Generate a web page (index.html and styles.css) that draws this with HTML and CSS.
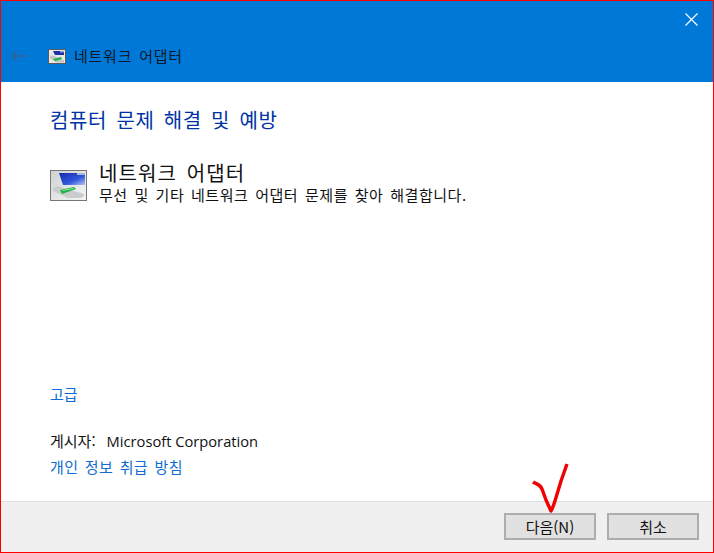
FILE: index.html
```html
<!DOCTYPE html>
<html lang="ko">
<head>
<meta charset="utf-8">
<title>네트워크 어댑터</title>
<link rel="stylesheet" href="styles.css">
</head>
<body>
<div class="window">
  <header class="titlebar">
    <div class="close-row">
      <svg class="close" width="13" height="13" viewBox="0 0 13 13"><path d="M.5.5l12 12M12.5.5l-12 12" stroke="#fff" stroke-width="1.2" fill="none"/></svg>
    </div>
    <div class="nav-row">
      <svg class="back" width="16" height="12" viewBox="0 0 16 12"><path d="M6 1L1 6l5 5M1 6h15" stroke="#2a66a6" stroke-width="1.800" fill="none"/></svg>
      <svg class="icon-small" width="18" height="15" viewBox="0 0 18 15">
        <rect x=".5" y=".5" width="17" height="14" fill="#e6e8e8" stroke="#5a5a5a"/>
        <path d="M5 2h11v4H7z" fill="#1c2fa8"/>
        <path d="M12 2h4v1.500h-4z" fill="#8c9ad0"/>
        <path d="M2 7l3-.5 11 5v2H8L2 9z" fill="#c0c4c4"/>
        <path d="M5 10l8-2 1 2-7 2z" fill="#1fb345"/>
      </svg>
      <span class="nav-title">네트워크 어댑터</span>
    </div>
  </header>
  <main class="content">
    <h1 class="heading">컴퓨터 문제 해결 및 예방</h1>
    <div class="item">
      <svg class="icon-large" width="37" height="31" viewBox="0 0 37 31">
        <defs>
          <linearGradient id="g" x1="0" y1="0" x2="1" y2="1"><stop offset="0" stop-color="#cfd2d2"/><stop offset="1" stop-color="#f5f5f5"/></linearGradient>
          <linearGradient id="b" x1="0" y1="0" x2="1" y2="1"><stop offset="0" stop-color="#1a2aa8"/><stop offset=".6" stop-color="#2f57dc"/><stop offset="1" stop-color="#b8c6ee"/></linearGradient>
        </defs>
        <rect x=".5" y=".5" width="36" height="30" fill="url(#g)" stroke="#777"/>
        <path d="M9 3h26v12H13z" fill="url(#b)"/>
        <path d="M27 3h8v2h-8z" fill="#aab4d8"/>
        <path d="M3 18l4-2 27 8v2l-3 2H18L3 21z" fill="#c9cdcd"/>
        <path d="M10 20l14-3 2 2-14 5z" fill="#1fb345"/>
        <path d="M12 20l11-2 1 1-11 2z" fill="#7be08f"/>
      </svg>
      <div class="item-text">
        <div class="item-title">네트워크 어댑터</div>
        <div class="item-desc">무선 및 기타 네트워크 어댑터 문제를 찾아 해결합니다.</div>
      </div>
    </div>
    <div class="links">
      <a class="link advanced">고급</a>
      <div class="publisher"><span>게시자:</span><span>Microsoft Corporation</span></div>
      <a class="link policy">개인 정보 취급 방침</a>
    </div>
  </main>
  <footer class="footer">
    <button class="btn">다음(N)</button>
    <button class="btn">취소</button>
  </footer>
  <svg class="check" width="40" height="54" viewBox="0 0 40 54"><path d="M3 20c3 2 7 2 9 7l4 11 5 11c3-5 5-14 7-20l3-10 6-17" stroke="#f00000" stroke-width="3.400" fill="none" stroke-linejoin="round"/></svg>
</div>
</body>
</html>
```
FILE: styles.css
```css
* { box-sizing: border-box; }
html, body { margin: 0; padding: 0; }
body { width: 714px; height: 553px; overflow: hidden; background: #fff; font-family: "Noto Sans CJK KR", "Open Sans", sans-serif; }
.window { position: relative; width: 714px; height: 553px; border: 1px solid #f00; display: flex; flex-direction: column; }
.titlebar { height: 81px; background: #0078d7; display: flex; flex-direction: column; flex: none; }
.close-row { display: flex; justify-content: flex-end; padding: 12px 15px 0 0; height: 43px; }
.nav-row { display: flex; align-items: center; height: 24px; padding-left: 10px; }
.back { margin-right: 21px; }
.icon-small { margin-right: 8px; }
.nav-title { font-size: 15px; color: #0b1a2b; line-height: 24px; letter-spacing: .75px; word-spacing: 2px; }
.content { flex: 1; display: flex; flex-direction: column; padding: 24px 0 0 49px; min-height: 0; }
.heading { margin: 0; font-size: 20px; font-weight: 400; line-height: 28px; color: #0033a5; letter-spacing: .65px; word-spacing: 3px; }
.item { display: flex; margin-top: 26px; }
.icon-large { margin: 10px 12px 0 0; flex: none; }
.item-text { display: flex; flex-direction: column; }
.item-title { font-size: 20px; line-height: 25px; color: #111; letter-spacing: 1.1px; word-spacing: 3px; }
.item-desc { font-size: 15px; line-height: 20px; color: #111; letter-spacing: .55px; word-spacing: 2px; }
.links { margin-top: auto; display: flex; flex-direction: column; padding-bottom: 23px; }
.link { font-size: 15px; line-height: 22px; color: #0f6cd0; }
.policy { letter-spacing: .35px; word-spacing: 2px; }
.advanced { margin-bottom: 24px; }
.publisher { display: flex; gap: 10px; font-size: 15px; line-height: 24px; color: #111; margin-bottom: 3px; }
.publisher span:last-child { font-family: "Open Sans", sans-serif; font-size: 14.700px; margin-left: 1px; }
.footer { height: 51px; flex: none; background: #f0f0f0; border-top: 1px solid #dfdfdf; display: flex; justify-content: flex-end; gap: 11px; padding: 11px 14px 0 0; }
.btn { width: 92px; height: 27px; background: #e1e1e1; border: 2px solid #adadad; font-family: inherit; font-size: 15px; line-height: 20px; color: #111; padding: 0; }
.check { position: absolute; left: 529px; top: 461px; }
```
